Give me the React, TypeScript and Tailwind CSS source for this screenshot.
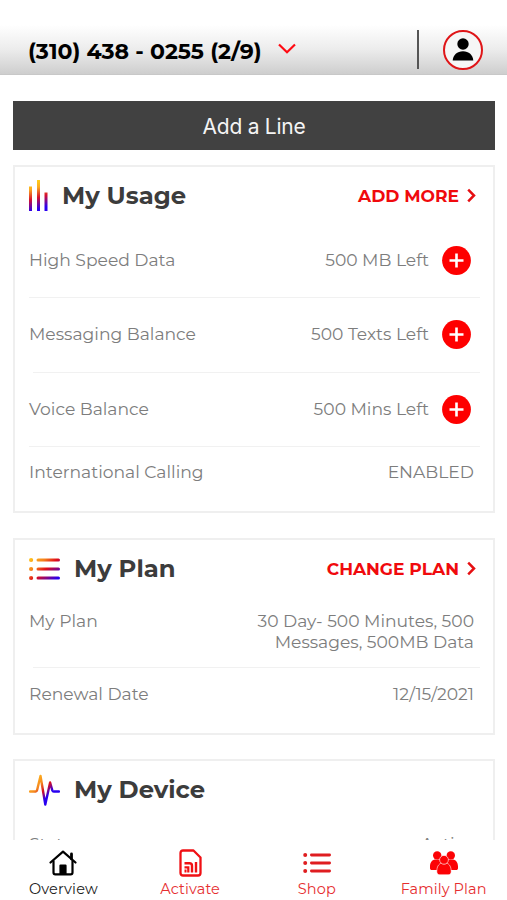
import type { ReactNode } from 'react';
import clsx from 'clsx';

const gray = 'pb-[2px] text-[17.15px] leading-[21px] text-[#7d7d7d]';

function UsageIcon() {
    return (
        <svg width="20" height="31" viewBox="0 0 20 31" className="shrink-0">
            <defs>
                <linearGradient id="usage" x1="5" y1="1" x2="13" y2="28" gradientUnits="userSpaceOnUse">
                    <stop offset="0" stopColor="#ffd01a" />
                    <stop offset="0.25" stopColor="#fbab1f" />
                    <stop offset="0.6" stopColor="#d8102c" />
                    <stop offset="1" stopColor="#2a00f0" />
                </linearGradient>
            </defs>
            <path fill="url(#usage)" d="M0 6.5h3V31H0zM8 0h3v31H8zM15.5 12.5h3V31h-3z" />
        </svg>
    );
}

function PlanIcon() {
    return (
        <svg width="31" height="24" viewBox="0 0 31 24" className="shrink-0">
            <defs>
                <linearGradient id="plan" x1="0" y1="2" x2="24" y2="30" gradientUnits="userSpaceOnUse">
                    <stop offset="0" stopColor="#ffc41a" />
                    <stop offset="0.28" stopColor="#f5811c" />
                    <stop offset="0.5" stopColor="#e00c18" />
                    <stop offset="0.9" stopColor="#2800f0" />
                </linearGradient>
            </defs>
            <g fill="url(#plan)">
                <circle cx="2.1" cy="3" r="2.1" />
                <circle cx="2.1" cy="12" r="2.1" />
                <circle cx="2.1" cy="21" r="2.1" />
                <rect x="7.5" y="1.5" width="23.5" height="3" rx="1.5" />
                <rect x="7.5" y="10.5" width="23.5" height="3" rx="1.5" />
                <rect x="7.5" y="19.5" width="23.5" height="3" rx="1.5" />
            </g>
        </svg>
    );
}

function PulseIcon() {
    return (
        <svg width="31" height="32" viewBox="0 0 31 32" fill="none" className="shrink-0">
            <defs>
                <linearGradient id="pulse" x1="4" y1="6" x2="25" y2="24" gradientUnits="userSpaceOnUse">
                    <stop offset="0" stopColor="#ffb81c" />
                    <stop offset="0.3" stopColor="#f58a1f" />
                    <stop offset="0.54" stopColor="#d50c22" />
                    <stop offset="0.77" stopColor="#2800f0" />
                </linearGradient>
            </defs>
            <path
                stroke="url(#pulse)"
                strokeWidth="2.4"
                strokeLinejoin="round"
                strokeLinecap="round"
                d="M1 17.5h5.6c.9 0 1.3-.5 1.5-1.4L11.5 2l4.8 28.5 4.8-22 2.2 7.8c.3.9.7 1.2 1.5 1.2H30"
            />
        </svg>
    );
}

function PlusButton() {
    return (
        <button className="mr-[3px] ml-[13px]">
            <svg width="29" height="29" viewBox="0 0 29 29" className="block">
                <circle cx="14.5" cy="14.5" r="14.4" fill="#fe0000" />
                <path d="M14.5 7.5v14M7.5 14.5h14" stroke="#fff" strokeWidth="2.6" />
            </svg>
        </button>
    );
}

function Chevron() {
    return (
        <svg width="9" height="15" viewBox="0 0 9 15" fill="none" className="block">
            <path d="M1.2 1.6 7 7.5l-5.8 5.9" stroke="#e60f12" strokeWidth="2.5" />
        </svg>
    );
}

interface CardProps {
    icon: ReactNode;
    title: string;
    titleClass: string;
    action?: string;
    className?: string;
    children: ReactNode;
}

function Card({ icon, title, titleClass, action, className, children }: CardProps) {
    return (
        <section className={clsx('shrink-0 border-2 border-[#efefef] bg-white pr-[13px] pl-[14px]', className)}>
            <div className="flex h-[57px] items-center pr-[4px]">
                {icon}
                <h2 className={clsx('text-[24.3px] font-bold text-[#3c3c3c]', titleClass)}>{title}</h2>
                {action && (
                    <button className="ml-auto flex items-center gap-[8px]">
                        <span className="text-[17.1px] font-bold text-[#f00a0d]">{action}</span>
                        <Chevron />
                    </button>
                )}
            </div>
            {children}
        </section>
    );
}

interface RowProps {
    label: string;
    value: string;
    plus?: boolean;
    className?: string;
}

function Row({ label, value, plus, className }: RowProps) {
    return (
        <div className={clsx('flex items-center pr-[6px]', className)}>
            <span className={gray}>{label}</span>
            <span className={clsx('ml-auto text-right whitespace-pre-line', gray)}>{value}</span>
            {plus && <PlusButton />}
        </div>
    );
}

function HomeIcon() {
    return (
        <svg width="28" height="26" viewBox="0 0 28 26" fill="none" stroke="#000" strokeWidth="2.2" strokeLinejoin="round" strokeLinecap="round">
            <path d="M1.5 12.5 14 1.7l12.5 10.8" />
            <path d="M4.5 11v11.5c0 1.2.6 1.8 1.8 1.8h15.4c1.2 0 1.8-.6 1.8-1.8V11" />
            <path d="M22.5 4v5" strokeWidth="2.8" />
            <path d="M11.5 15.5h5V24h-5z" fill="#000" />
        </svg>
    );
}

function SimIcon() {
    return (
        <svg width="23" height="28" viewBox="0 0 23 28" fill="none" stroke="#f01014" strokeWidth="2.3">
            <path d="M4 1.5h10.5l7 7V24c0 1.500-1 2.500-2.500 2.500H4c-1.500 0-2.500-1-2.500-2.500V4C1.500 2.500 2.500 1.500 4 1.500z" strokeLinejoin="round" />
            <path d="M5.500 14.200h5c1.700 0 2.500.8 2.500 2.500v6.800M17 13v10.500" strokeWidth="2.4" />
            <path d="M5.500 18.400h3.800v5.100" strokeWidth="2.2" />
            <path d="M6.500 20.500v3" strokeWidth="2" />
        </svg>
    );
}

function ShopIcon() {
    return (
        <svg width="28" height="22" viewBox="0 0 28 22" fill="#df1d20">
            <circle cx="2.2" cy="3" r="2" />
            <circle cx="2.2" cy="11" r="2" />
            <circle cx="2.2" cy="19" r="2" />
            <rect x="7" y="1.6" width="21" height="2.8" rx="1.4" />
            <rect x="7" y="9.6" width="21" height="2.8" rx="1.4" />
            <rect x="7" y="17.6" width="21" height="2.8" rx="1.4" />
        </svg>
    );
}

function FamilyIcon() {
    return (
        <svg width="28" height="24" viewBox="0 0 28 24" fill="#fc0205">
            <circle cx="7.2" cy="4.5" r="4.2" />
            <circle cx="20.8" cy="4.5" r="4.2" />
            <path d="M0 15.5C0 11.5 2 8.8 5 8.4c1.5.8 3 .8 4.5 0C12 8.8 13 11 13 13v6H2c-1.300 0-2-.6-2-2z" />
            <path d="M28 15.5c0-4-2-6.7-5-7.1-1.5.8-3 .8-4.5 0-2.5.4-3.5 2.6-3.5 4.600v6h11c1.300 0 2-.6 2-2z" />
            <g stroke="#fff" strokeWidth="0.6">
                <path d="M6.800 20.500c0-4.500 1.700-7.700 4.700-8.300 1.700.9 3.300.9 5 0 3 .6 4.700 3.800 4.700 8.300 0 2.200-1.200 3.300-3 3.300H9.800c-1.800 0-3-1.100-3-3.300z" />
                <circle cx="14" cy="8.8" r="4.4" />
            </g>
        </svg>
    );
}

const tabs = [
    { label: 'Overview', icon: <HomeIcon />, className: 'text-[#222] tracking-[0.15px]' },
    { label: 'Activate', icon: <SimIcon />, className: 'text-[#e62e30] tracking-[0.1px]' },
    { label: 'Shop', icon: <ShopIcon />, className: 'text-[#e62e30] tracking-[0.1px]' },
    { label: 'Family Plan', icon: <FamilyIcon />, className: 'text-[#e62e30] tracking-[0.1px]' },
];

export default function App() {
    return (
        <div className="flex h-screen w-full flex-col overflow-hidden bg-white font-['Montserrat','Inter',sans-serif]">
            <header className="mt-[25px] flex h-[50px] shrink-0 items-center border-b border-[#c8c8c8] bg-linear-to-b from-white via-[#ececec] to-[#cecece] pr-[24px] pl-[28px]">
                <span className="pt-[4px] text-[22px] font-bold text-black">(310) 438 - 0255 (2/9)</span>
                <svg width="18" height="11" viewBox="0 0 18 11" fill="none" className="mb-[2px] ml-[16px]">
                    <path d="M1 1.5 9 9.2l8-7.7" stroke="#ff0a12" strokeWidth="2.2" />
                </svg>
                <div className="ml-auto h-[39px] w-[2px] bg-[#555]" />
                <svg width="40" height="40" viewBox="0 0 40 40" className="ml-[24px]">
                    <circle cx="20" cy="20" r="19" fill="#f6f6f6" stroke="#df1518" strokeWidth="2" />
                    <circle cx="20" cy="14" r="5.7" />
                    <path d="M9.7 30.5c.3-5.5 4.500-9.300 10.300-9.300s10 3.800 10.300 9.300z" />
                </svg>
            </header>

            <main className="flex min-h-0 flex-1 flex-col overflow-hidden pt-[26px] pr-[12px] pl-[13px]">
                <button className="h-[49px] shrink-0 bg-[#414141] pt-[2px] font-['Inter',sans-serif] text-[21px] tracking-[-0.25px] text-[#f4f4f4]">
                    Add a Line
                </button>

                <Card className="mt-[15px] h-[348px]" icon={<UsageIcon />} title="My Usage" titleClass="ml-[13px]" action="ADD MORE">
                    <Row className="h-[73px]" label="High Speed Data" value="500 MB Left" plus />
                    <div className="border-t border-[#f1f1f1]" />
                    <Row className="h-[74px] pb-[2px]" label="Messaging Balance" value="500 Texts Left" plus />
                    <div className="ml-[4px] border-t border-[#f1f1f1]" />
                    <Row className="h-[73px] pb-px" label="Voice Balance" value="500 Mins Left" plus />
                    <div className="border-t border-[#f1f1f1]" />
                    <Row className="h-[50px]" label="International Calling" value="ENABLED" />
                </Card>

                <Card className="mt-[25px] h-[197px]" icon={<PlanIcon />} title="My Plan" titleClass="ml-[14px]" action="CHANGE PLAN">
                    <Row
                        className="h-[70px] items-start pt-[13px]"
                        label="My Plan"
                        value={'30 Day- 500 Minutes, 500\nMessages, 500MB Data'}
                    />
                    <div className="ml-[4px] border-t border-[#f1f1f1]" />
                    <Row className="h-[52px]" label="Renewal Date" value="12/15/2021" />
                </Card>

                <Card className="mt-[24px] h-[197px]" icon={<PulseIcon />} title="My Device" titleClass="ml-[14px]">
                    <Row className="h-[52px]" label="Status" value="Active" />
                </Card>
            </main>

            <nav className="grid h-[60px] shrink-0 grid-cols-4 bg-white">
                {tabs.map((tab) => (
                    <button key={tab.label} className="flex flex-col items-center pt-[8px]">
                        <span className="flex h-[29px] items-center">{tab.icon}</span>
                        <span className={clsx('text-[14.5px] leading-[25px] whitespace-nowrap', tab.className)}>{tab.label}</span>
                    </button>
                ))}
            </nav>
        </div>
    );
}
